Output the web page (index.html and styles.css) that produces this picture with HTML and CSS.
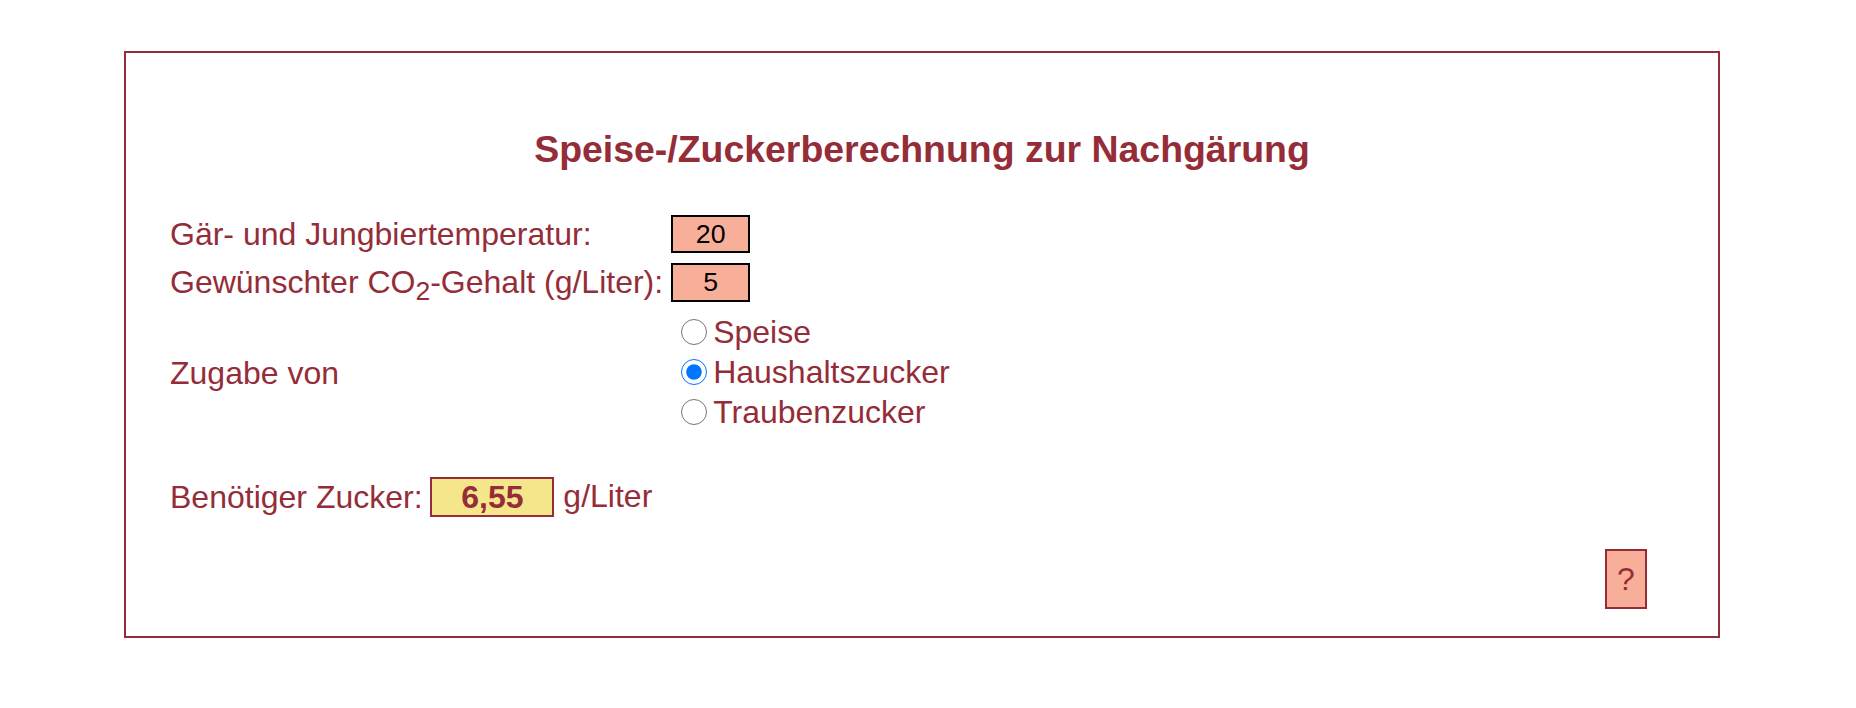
FILE: index.html
```html
<!DOCTYPE html>
<html lang="de">
<head>
<meta charset="utf-8">
<title>Speise-/Zuckerberechnung zur Nachgärung</title>
<link rel="stylesheet" href="styles.css">
</head>
<body>
<div class="panel">
  <h1 class="title">Speise-/Zuckerberechnung zur Nachgärung</h1>
  <div class="form">
    <div class="label r1">Gär- und Jungbiertemperatur:</div>
    <div class="field r1"><input class="num h38" type="text" value="20"></div>
    <div class="label r2">Gewünschter CO<sub>2</sub>-Gehalt (g/Liter):</div>
    <div class="field r2"><input class="num h39" type="text" value="5"></div>
    <div class="label r3">Zugabe von</div>
    <div class="options r3">
      <label class="opt"><input type="radio" name="zugabe" class="radio"><span>Speise</span></label>
      <label class="opt"><input type="radio" name="zugabe" class="radio" checked><span>Haushaltszucker</span></label>
      <label class="opt"><input type="radio" name="zugabe" class="radio"><span>Traubenzucker</span></label>
    </div>
  </div>
  <div class="result">Benötiger Zucker: <span class="res-box">6,55</span> <span class="unit">g/Liter</span></div>
  <div class="help-row"><button class="help" type="button">?</button></div>
</div>
</body>
</html>
```
FILE: styles.css
```css
html, body {
  margin: 0;
  padding: 0;
  background: #ffffff;
}
body {
  font-family: "Liberation Sans", Arial, sans-serif;
  font-size: 32px;
  color: #952d39;
}
.panel {
  margin: 51px 0 0 124px;
  width: 1592px;
  border: 2px solid #952d39;
  padding: 0 0 27px 0;
}
.title {
  margin: 75px 0 0 0;
  font-size: 37.44px;
  line-height: 43px;
  font-weight: bold;
  text-align: center;
  color: #952d39;
}
.form {
  margin: 44px 0 0 44px;
  display: grid;
  grid-template-columns: max-content max-content;
  column-gap: 8px;
  row-gap: 10px;
}
.label {
  align-self: center;
  white-space: nowrap;
}
.label sub {
  font-size: 0.83em;
  line-height: 0;
}
.field {
  display: flex;
  align-items: center;
}
.num {
  box-sizing: border-box;
  width: 79px;
  border: 2px solid #000000;
  background: #f8af9a;
  font-family: "Liberation Sans", Arial, sans-serif;
  font-size: 26.67px;
  color: #000000;
  text-align: center;
  padding: 0;
  margin: 0;
  outline: none;
}
.h38 { height: 38px; }
.h39 { height: 39px; }
.options {
  margin-top: 2px;
  display: flex;
  flex-direction: column;
}
.opt {
  display: flex;
  align-items: flex-start;
  height: 40px;
  line-height: 36.8px;
}
.radio {
  width: 26px;
  height: 26px;
  margin: 5px 6px 0 10px;
  flex: none;
}
.result {
  margin: 43px 0 0 44px;
  white-space: nowrap;
}
.res-box {
  display: inline-block;
  box-sizing: border-box;
  width: 124px;
  height: 40px;
  line-height: 36px;
  margin-left: -1px;
  border: 2px solid #952d39;
  background: #f5e68c;
  font-weight: bold;
  text-align: center;
  vertical-align: baseline;
}
.unit {
  vertical-align: 1px;
}
.help-row {
  display: flex;
  justify-content: flex-end;
  padding-right: 71px;
  margin-top: 32px;
}
.help {
  box-sizing: border-box;
  width: 42px;
  height: 60px;
  border: 2px solid #952d39;
  background: #f8af9a;
  color: #952d39;
  font-family: "Liberation Sans", Arial, sans-serif;
  font-size: 32px;
  padding: 0;
  margin: 0;
}
```
